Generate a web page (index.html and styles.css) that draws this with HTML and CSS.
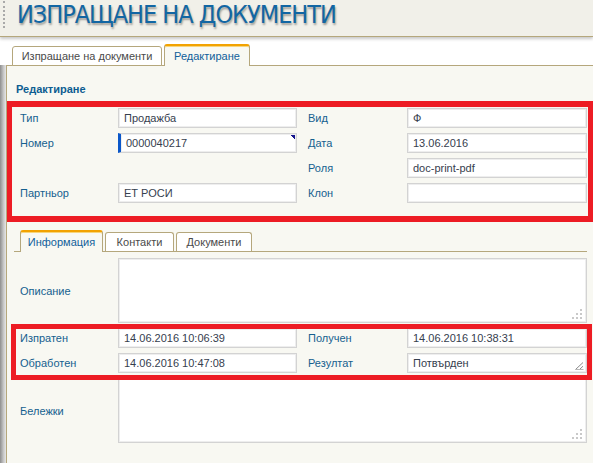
FILE: index.html
```html
<!DOCTYPE html>
<html lang="bg">
<head>
<meta charset="utf-8">
<title>Изпращане на документи</title>
<link rel="stylesheet" href="styles.css">
</head>
<body>
<header class="header">
  <div class="dots"></div>
  <h1 class="title">ИЗПРАЩАНЕ НА ДОКУМЕНТИ</h1>
</header>
<nav class="tabs outer">
  <div class="tab">Изпращане на документи</div>
  <div class="tab active">Редактиране</div>
</nav>
<div class="workspace">
  <div class="edge"></div>
  <main class="panel">
    <div class="section-title">Редактиране</div>
    <div class="hl hl1">
      <div class="form">
        <div class="lbl">Тип</div>
        <div class="fld">Продажба</div>
        <div class="lbl lbl-r">Вид</div>
        <div class="fld">Ф</div>

        <div class="lbl">Номер</div>
        <div class="fld fld-key">0000040217</div>
        <div class="lbl lbl-r">Дата</div>
        <div class="fld">13.06.2016</div>

        <div class="empty"></div>
        <div class="lbl lbl-r">Роля</div>
        <div class="fld">doc-print-pdf</div>

        <div class="lbl">Партньор</div>
        <div class="fld">ЕТ РОСИ</div>
        <div class="lbl lbl-r">Клон</div>
        <div class="fld"></div>
      </div>
    </div>

    <nav class="tabs inner">
      <div class="tab active t-info">Информация</div>
      <div class="tab t-cont">Контакти</div>
      <div class="tab t-docs">Документи</div>
    </nav>

    <div class="inner-body">
      <div class="form form-tall">
        <div class="lbl">Описание</div>
        <div class="area">
          <svg class="grip" width="11" height="11" viewBox="0 0 11 11"><rect x="8" y="0" width="2" height="2"/><rect x="4" y="4" width="2" height="2"/><rect x="8" y="4" width="2" height="2"/><rect x="0" y="8" width="2" height="2"/><rect x="4" y="8" width="2" height="2"/><rect x="8" y="8" width="2" height="2"/></svg>
        </div>
      </div>
      <div class="hl hl2">
        <div class="form">
          <div class="lbl">Изпратен</div>
          <div class="fld">14.06.2016 10:06:39</div>
          <div class="lbl lbl-r">Получен</div>
          <div class="fld">14.06.2016 10:38:31</div>

          <div class="lbl">Обработен</div>
          <div class="fld">14.06.2016 10:47:08</div>
          <div class="lbl lbl-r">Резултат</div>
          <div class="fld fld-resize"><span>Потвърден</span><svg class="resize" width="9" height="8" viewBox="0 0 9 8"><path d="M0.5 7.5 L8 0.5 M4.5 7.5 L8 4.2" stroke="#8a8a8a" stroke-width="1" fill="none"/><path d="M0.5 7.5 H8.5" stroke="#b8b8b8" stroke-width="1"/></svg></div>
        </div>
      </div>
      <div class="form form-tall">
        <div class="lbl">Бележки</div>
        <div class="area">
          <svg class="grip" width="11" height="11" viewBox="0 0 11 11"><rect x="8" y="0" width="2" height="2"/><rect x="4" y="4" width="2" height="2"/><rect x="8" y="4" width="2" height="2"/><rect x="0" y="8" width="2" height="2"/><rect x="4" y="8" width="2" height="2"/><rect x="8" y="8" width="2" height="2"/></svg>
        </div>
      </div>
    </div>
  </main>
</div>
</body>
</html>
```
FILE: styles.css
```css
html, body {
  margin: 0;
  padding: 0;
}
body {
  font: 11px "Liberation Sans", Arial, sans-serif;
  background: #ffffff;
  display: flex;
  flex-direction: column;
  min-height: 100vh;
  overflow: hidden;
}

/* header */
.header {
  position: relative;
  z-index: 2;
  height: 36px;
  background: #f1f0e9;
  border-bottom: 1px solid #b5a77c;
  box-shadow: 0 2px 3px rgba(0, 0, 0, 0.22);
  display: flex;
  align-items: flex-start;
  padding-left: 3px;
}
.dots {
  width: 0;
  height: 27px;
  margin-top: 1px;
  border-left: 2px dotted #a9a9a9;
}
.title {
  margin: 0 0 0 12px;
  font: normal 25px "Liberation Sans Narrow", "DejaVu Sans Condensed", "Liberation Sans", sans-serif;
  line-height: 30px;
  color: #1266a3;
  text-shadow: 1px 2px 2px rgba(0, 0, 0, 0.35);
  letter-spacing: -1px;
}

/* tabs */
.tabs {
  display: flex;
  align-items: flex-end;
  gap: 2px;
  position: relative;
  z-index: 1;
}
.tab {
  box-sizing: border-box;
  border: 1px solid #b5a77c;
  border-bottom: none;
  border-radius: 3px 3px 0 0;
  background: #ffffff;
  color: #4a4a4a;
  display: flex;
  align-items: center;
  justify-content: center;
}
.tab.active {
  border-top: 2px solid #f2a200;
  box-shadow: inset 0 1px 0 #f7d57a;
  background: #f8f8f2;
  color: #10609a;
}
.outer {
  margin-top: 8px;
  padding-left: 12px;
  height: 21px;
  margin-bottom: -1px;
}
.outer .tab {
  height: 20px;
  width: 150px;
  border-bottom: 1px solid #b5a77c;
}
.outer .tab.active {
  height: 22px;
  width: 86px;
  border-bottom: none;
}

/* workspace */
.workspace {
  flex: 1;
  display: flex;
}
.edge {
  width: 6px;
  background: linear-gradient(to right, #8e8e8e, #c8c8c8 60%, #e6e6e6);
}
.panel {
  flex: 1;
  background: #f8f8f2;
  border-left: 1px solid #b5a77c;
  border-top: 1px solid #b5a77c;
  padding: 16px 6px 0 13px;
}
.section-title {
  margin-left: -4px;
  font-weight: bold;
  line-height: 14px;
  color: #0d5d91;
  margin-bottom: 12px;
}

/* forms */
.form {
  display: grid;
  grid-template-columns: 98px 179px 110px 180px;
  grid-auto-rows: 20px;
  row-gap: 5px;
}
.form-tall {
  grid-auto-rows: 65px;
}
.lbl {
  display: flex;
  align-items: center;
  color: #15608f;
}
.lbl-r {
  padding-left: 11px;
}
.empty {
  grid-column: 1 / span 2;
}
.fld {
  box-sizing: border-box;
  border: 1px solid #d3d3d3;
  box-shadow: inset 0 0 0 1px #eeeeee;
  background: #ffffff;
  padding: 0 5px;
  display: flex;
  align-items: center;
  color: #36404e;
  white-space: nowrap;
}
.fld-key {
  border-left: 3px solid #0a57c9;
  padding-left: 5px;
  background: linear-gradient(to bottom left, #14148c 50%, transparent 50%) top right / 6px 6px no-repeat, #ffffff;
}
.fld-resize {
  justify-content: space-between;
  align-items: center;
  padding-right: 2px;
}
.resize {
  align-self: flex-end;
  margin-bottom: 2px;
}

.area {
  grid-column: 2 / span 3;
  box-sizing: border-box;
  border: 1px solid #d3d3d3;
  box-shadow: inset 0 0 0 1px #eeeeee;
  background: #ffffff;
  display: flex;
  align-items: flex-end;
  justify-content: flex-end;
  padding: 0 3px 2px 0;
}
.grip {
  fill: #c9c9c9;
}

/* highlight annotations (overlay) */
.hl {
  position: relative;
}
.hl::after {
  content: "";
  position: absolute;
  pointer-events: none;
  border-style: solid;
  border-color: #ed1c24;
}
.hl1::after {
  top: -7px;
  bottom: -19px;
  left: -13px;
  right: -6px;
  border-width: 6px 5px;
}
.hl2::after {
  top: -4px;
  bottom: -7px;
  left: -9px;
  right: -5px;
  border-width: 5px;
}

/* inner tabs */
.inner {
  margin: 27px 0 0 -6px;
  padding-left: 6px;
  height: 21px;
  border-bottom: 1px solid #b5a77c;
}
.inner .tab {
  height: 19px;
}
.inner .tab.active {
  height: 22px;
  margin-bottom: -1px;
}
.t-info { width: 83px; }
.t-cont { width: 69px; }
.t-docs { width: 76px; }

.inner-body {
  margin-top: 6px;
  display: flex;
  flex-direction: column;
  gap: 5px;
}
```
